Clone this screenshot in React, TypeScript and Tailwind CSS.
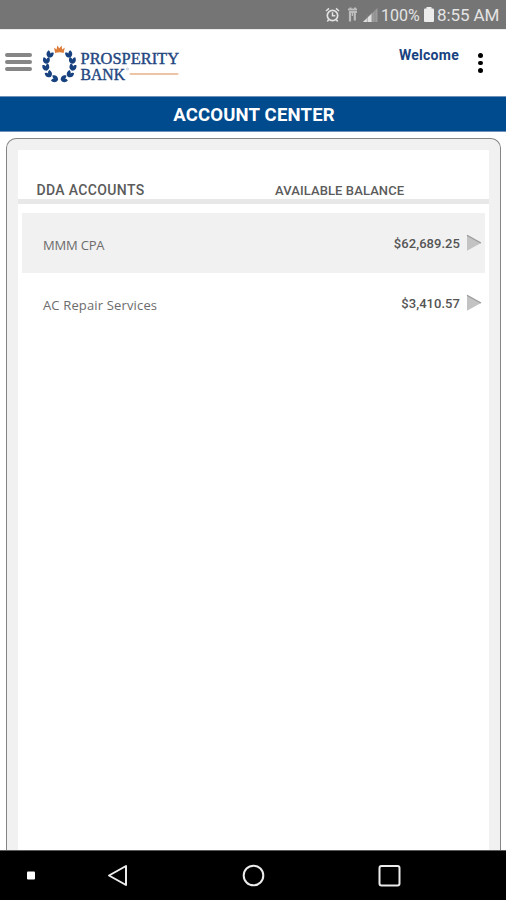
const accounts = [
  { name: 'MMM CPA', balance: '$62,689.25', row: 'bg-[#f1f1f1]', nameStyle: 'tracking-[-0.2px]' },
  { name: 'AC Repair Services', balance: '$3,410.57', row: 'bg-white', nameStyle: 'tracking-[0.15px]' },
];

const leaves = [
  { x: 9.8, y: 11.4, angle: 25 },
  { x: 6.4, y: 17.4, angle: 0 },
  { x: 6, y: 24.4, angle: -15 },
  { x: 8.8, y: 31.2, angle: -35 },
  { x: 14.8, y: 35.8, angle: -75 },
];

function LaurelHalf() {
  return (
    <g fill="#17417f">
      {leaves.map((leaf) => (
        <g key={leaf.y} transform={`translate(${leaf.x} ${leaf.y}) rotate(${leaf.angle})`}>
          <path d="M0 3.4C-3.8 2.4-4-.8-2.8-3.2C-1.2-2.8-.3-2.2 0-1C.3-2.2 1.2-2.8 2.8-3.2C4-.8 3.8 2.4 0 3.4Z" />
        </g>
      ))}
    </g>
  );
}

function Logo() {
  return (
    <svg className="h-[42px] w-[142px]" viewBox="0 0 142 42">
      <LaurelHalf />
      <g transform="translate(38.8 0) scale(-1 1)">
        <LaurelHalf />
      </g>
      <path d="M14 4.4L16.6 6.4L17.2 2.4L19.4 5.2L21.6 2.4L22.2 6.4L24.8 4.4L23.6 10Q19.4 8.4 15.2 10Z" fill="#de7d3a" />
      <g fill="#24467f" stroke="#24467f" strokeWidth="0.4" fontFamily="'Liberation Serif', serif" fontSize="16">
        <text x="40.5" y="20.7" textLength="98.5" lengthAdjust="spacingAndGlyphs">PROSPERITY</text>
        <text x="40.5" y="36.8" textLength="44.5" lengthAdjust="spacingAndGlyphs">BANK</text>
      </g>
      <circle cx="87.5" cy="26" r="1" fill="none" stroke="#9aabc6" strokeWidth="0.6" />
      <path d="M90.5 31H137.5" stroke="#efc4a5" strokeWidth="2.2" strokeLinecap="round" />
    </svg>
  );
}

function StatusBar() {
  return (
    <div className="flex h-[29px] shrink-0 items-center bg-[#757575] pl-[324px] text-[#e4e4e4]">
      <svg className="h-[30px] w-[56px] shrink-0" viewBox="0 0 56 30" fill="none" stroke="#e2e2e2">
        <circle cx="8.5" cy="15.5" r="5.2" strokeWidth="1.7" />
        <path d="M8.5 12.2V15.8H11.3M2 11L5 8.4M15 11L12 8.4M4.8 19.5L3.3 21.5M12.2 19.5L13.7 21.5" strokeWidth="1.5" />
        <g stroke="#bcbcbc">
          <path d="M24 9.5H33M25 12H33" strokeWidth="2" />
          <path d="M26.5 7.5V10M31 7.5V10" strokeWidth="2" />
          <path d="M26 12V21.5M30.8 13V20.5" strokeWidth="2.2" />
          <path d="M28.4 12V16" strokeWidth="1.4" />
        </g>
        <path d="M53.5 8V22H39Z" fill="#9b9b9b" stroke="none" />
        <path d="M48 13.3V22H39Z" fill="#e0e0e0" stroke="none" />
        <path d="M43.3 15V22M47.8 12V22M51 9V22" stroke="#858585" strokeWidth="0.6" />
      </svg>
      <span className="mt-[2px] ml-px w-[39px] text-[16px] leading-none whitespace-nowrap">100%</span>
      <svg className="ml-[3px] h-[17px] w-[12px] shrink-0" viewBox="0 0 12 17" fill="#ececec">
        <rect x="3.5" y="1" width="5" height="3" />
        <rect x="1" y="2.5" width="10" height="13.5" rx="1" />
      </svg>
      <span className="mt-[2px] ml-[2px] text-[17px] leading-none tracking-[-0.1px] whitespace-nowrap">8:55 AM</span>
    </div>
  );
}

function Header() {
  return (
    <div className="flex h-[67px] shrink-0 items-start border-t border-[#ececec] bg-white pl-[5px]">
      <div className="mt-[23px] flex w-[27px] flex-col gap-[3px]">
        <div className="h-[4px] rounded-full bg-[#868686]" />
        <div className="h-[4px] rounded-full bg-[#868686]" />
        <div className="h-[4px] rounded-full bg-[#868686]" />
      </div>
      <div className="mt-[13px] ml-[8px]">
        <Logo />
      </div>
      <span className="mt-[16px] ml-[217px] w-[61px] text-[14px] leading-[18px] font-bold tracking-[0.25px] text-[#174281]">Welcome</span>
      <div className="mt-[23px] ml-[18px] flex flex-col gap-[3px]">
        <div className="size-[4.5px] rounded-full bg-black" />
        <div className="size-[4.5px] rounded-full bg-black" />
        <div className="size-[4.5px] rounded-full bg-black" />
      </div>
    </div>
  );
}

function AccountCard() {
  return (
    <div className="mt-[6px] mr-[5px] ml-[6px] flex flex-1 flex-col rounded-t-[10px] border border-b-0 border-[#858585] bg-[#f1f1f1] px-[11px] pt-[11px]">
      <div className="flex flex-1 flex-col bg-white">
        <div className="flex h-[54px] items-end border-b-[5px] border-[#e8e8e8] pb-px pl-[18.5px] text-[#5b5b5b]">
          <span className="w-[238.5px] text-[14px] leading-[16px] font-medium tracking-[0.35px]">DDA ACCOUNTS</span>
          <span className="text-[13px] leading-[15px] font-medium tracking-[0.1px]">AVAILABLE BALANCE</span>
        </div>
        <div className="mx-1 mt-[9px]">
          {accounts.map((account) => (
            <div key={account.name} className={`flex h-[60px] items-center pr-[3px] pl-[21px] ${account.row}`}>
              <span className={`mt-[5px] flex-1 font-['Open_Sans'] text-[13px] text-[#6c6c6c] ${account.nameStyle}`}>{account.name}</span>
              <span className="mt-[2px] mr-[6px] text-[13px] font-medium tracking-[0.05px] text-[#555]">{account.balance}</span>
              <svg className="h-[18px] w-[16px]" viewBox="0 0 16 18">
                <path d="M1 1.2L15 9L1 16.8Z" fill="#c3c3c3" />
                <path d="M1 1.2L15 9" stroke="#999" strokeWidth="1.2" />
              </svg>
            </div>
          ))}
        </div>
      </div>
    </div>
  );
}

function NavBar() {
  return (
    <div className="flex h-[50px] shrink-0 items-center border-t border-[#5c5c5c] bg-black">
      <svg className="h-[49px] w-[506px]" viewBox="0 0 506 49" fill="none" stroke="#ececec" strokeWidth="2">
        <rect x="27" y="20.5" width="8" height="8" rx="1" fill="#fff" stroke="none" />
        <path d="M126 15V34L109 24.5Z" strokeLinejoin="round" />
        <circle cx="253.5" cy="24.5" r="9.8" />
        <rect x="379.5" y="15" width="20" height="19.5" rx="2" />
      </svg>
    </div>
  );
}

export default function App() {
  return (
    <div className="flex h-[900px] w-[506px] flex-col overflow-hidden bg-white font-['Roboto',sans-serif]">
      <StatusBar />
      <Header />
      <div className="flex h-[36px] shrink-0 items-center justify-center border-y border-[#6f91b9] bg-[#004b8d] pt-[3px] pl-[2px]">
        <h1 className="text-[18.5px] font-bold tracking-[0.2px] text-white">ACCOUNT CENTER</h1>
      </div>
      <AccountCard />
      <NavBar />
    </div>
  );
}
